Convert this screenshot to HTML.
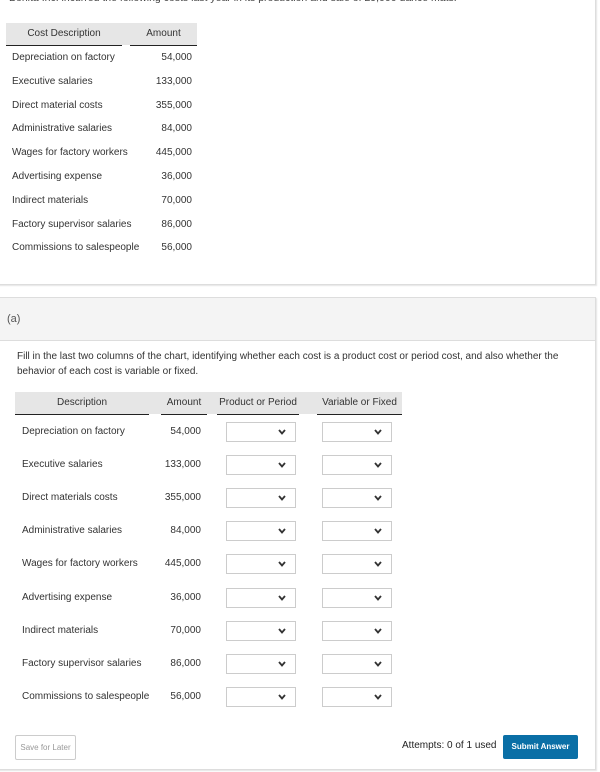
<!DOCTYPE html>
<html><head><style>
body{margin:0;width:600px;height:772px;background:#fff;font-family:"Liberation Sans",sans-serif;font-size:10px;color:#333;position:relative;overflow:hidden}
.a{position:absolute;white-space:nowrap}
.box1{position:absolute;left:-2px;top:-2px;width:597px;height:285px;border:1px solid #ddd;border-left:none;box-shadow:1px 1px 1px #e5e5e5}
.box2{position:absolute;left:-2px;top:297px;width:597px;height:471px;border:1px solid #ddd;border-left:none;box-shadow:1px 1px 1px #e5e5e5}
.hd{position:absolute;left:0;top:0;right:0;height:42px;background:#f4f4f4;border-bottom:1px solid #ddd}
.th{position:absolute;background:#e6e6e6;border-bottom:1px solid #222;text-align:center;font-size:10px;color:#333}
.sel{position:absolute;width:68px;height:18px;border:1px solid #ccc;background:#fff}
.sel svg{position:absolute;right:9px;top:6px}
</style></head><body>
<div class="box1"></div>
<div class="a" style="left:9px;top:-8px;font-size:10.5px;color:#444">Bonita Inc. incurred the following costs last year in its production and sale of 29,000 dance mats.</div>
<div class="th" style="left:6px;top:23px;width:116px;height:22px;line-height:22px">Cost Description</div>
<div style="position:absolute;left:122px;top:23px;width:8px;height:22px;background:#e6e6e6"></div>
<div class="th" style="left:130px;top:23px;width:67px;height:22px;line-height:22px">Amount</div>

<div class="box2"><div class="hd"></div></div>
<div class="a" style="left:7px;top:313px;font-size:11px;color:#555">(a)</div>
<div class="a" style="left:17px;top:349px;line-height:15px">Fill in the last two columns of the chart, identifying whether each cost is a product cost or period cost, and also whether the<br>behavior of each cost is variable or fixed.</div>
<div style="position:absolute;left:15px;top:392px;width:387px;height:22px;background:#e6e6e6"></div>
<div class="th" style="left:15px;top:392px;width:134px;height:22px;line-height:22px">Description</div>
<div class="th" style="left:161px;top:392px;width:46px;height:22px;line-height:22px">Amount</div>
<div class="th" style="left:217px;top:392px;width:82px;height:22px;line-height:22px">Product or Period</div>
<div class="th" style="left:317px;top:392px;width:85px;height:22px;line-height:22px">Variable or Fixed</div>

<div id="rows"></div>
<script>
var d=[["Depreciation on factory","54,000"],["Executive salaries","133,000"],["Direct material costs","355,000"],["Administrative salaries","84,000"],["Wages for factory workers","445,000"],["Advertising expense","36,000"],["Indirect materials","70,000"],["Factory supervisor salaries","86,000"],["Commissions to salespeople","56,000"]];
var h="";
var chev='<svg width="8" height="6" viewBox="0 0 8 6"><path d="M1 1L4 4.5L7 1" stroke="#333" stroke-width="1.8" fill="none"/></svg>';
d.forEach(function(r,i){
 var y=52+i*23.8;
 h+='<div class="a" style="left:12px;top:'+y+'px">'+r[0]+'</div><div class="a" style="left:130px;width:62px;text-align:right;top:'+y+'px">'+r[1]+'</div>';
 var n=r[0]=="Direct material costs"?"Direct materials costs":r[0];
 var y2=426+i*33.1;
 h+='<div class="a" style="left:22px;top:'+y2+'px">'+n+'</div><div class="a" style="left:139px;width:62px;text-align:right;top:'+y2+'px">'+r[1]+'</div>';
 h+='<div class="sel" style="left:226px;top:'+(y2-4)+'px">'+chev+'</div><div class="sel" style="left:322px;top:'+(y2-4)+'px">'+chev+'</div>';
});
document.getElementById("rows").innerHTML=h;
</script>
<div style="position:absolute;left:15px;top:735px;width:59px;height:23px;border:1px solid #ccc;border-radius:2px;color:#999;font-size:8px;text-align:center;line-height:23px">Save for Later</div>
<div class="a" style="left:402px;top:740px;font-size:10px;color:#222">Attempts: 0 of 1 used</div>
<div style="position:absolute;left:503px;top:735px;width:75px;height:24px;background:#0a6fa6;color:#fff;font-size:8px;font-weight:bold;text-align:center;line-height:24px;border-radius:2px">Submit Answer</div>
</body></html>
